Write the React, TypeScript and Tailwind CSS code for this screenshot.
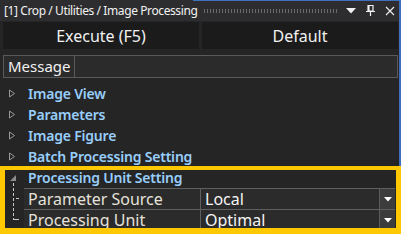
import React from "react";

const font = { fontFamily: '"Noto Sans", "Open Sans", sans-serif' };

function Collapsed() {
    return (
        <svg width="8" height="9" viewBox="0 0 8 9" className="shrink-0">
            <path d="M1.5 1 L6.5 4.5 L1.5 8 Z" fill="none" stroke="#9a9a9a" strokeWidth="1"/>
        </svg>
    );
}

function Expanded() {
    return (
        <svg width="8" height="8" viewBox="0 0 8 8" className="shrink-0">
            <path d="M7 1 L7 7 L1 7 Z" fill="#8c8c8c"/>
        </svg>
    );
}

function DropButton() {
    return (
        <div className="w-[16px] h-full bg-[#3c3c3c] border-l border-[#5c5c5c] flex items-center justify-center">
            <svg width="8" height="5" viewBox="0 0 8 5">
                <path d="M0 0 L8 0 L4 4.5 Z" fill="#ffffff"/>
            </svg>
        </div>
    );
}

export default function App() {
    const groups = ["Image View", "Parameters", "Image Figure", "Batch Processing Setting"];
    const props = [
        ["Parameter Source", "Local"],
        ["Processing Unit", "Optimal"],
    ];

    return (
        <div className="w-[401px] h-[234px] bg-[#252526] relative overflow-hidden" style={font}>

            {/* Title bar */}
            <div className="h-[21px] flex items-center bg-[#2d2d30] pl-[4px] pr-[6px] text-[12px] text-[#f1f1f1]">
                <span className="whitespace-nowrap leading-none tracking-[-0.4px]">[1] Crop / Utilities / Image Processing</span>
                <div className="flex-1 ml-[6px] mr-[9px] h-[4px] bg-[radial-gradient(circle,#6a6a6e_0.7px,transparent_0.8px)] bg-[length:3px_2px]"/>
                <div className="flex items-center gap-[10px]">
                    <svg width="10" height="6" viewBox="0 0 10 6">
                        <path d="M0 0 L10 0 L5 5.5 Z" fill="#f1f1f1"/>
                    </svg>
                    <svg width="9" height="11" viewBox="0 0 9 11">
                        <path d="M2 0.5 H7 V6 H2 Z M3 0.5 V6 M0 6.5 H9 M4.5 6.5 V11" fill="none" stroke="#f1f1f1" strokeWidth="1.2"/>
                    </svg>
                    <svg width="10" height="10" viewBox="0 0 10 10">
                        <path d="M1 1 L9 9 M9 1 L1 9" stroke="#f1f1f1" strokeWidth="1.1"/>
                    </svg>
                </div>
            </div>

            {/* Toolbar */}
            <div className="flex gap-[3px] px-[3px] pt-[1px] h-[29px]">
                <button className="flex-1 h-[27px] bg-[#1b1b1c] text-[16px] text-[#f1f1f1]">Execute (F5)</button>
                <button className="flex-1 h-[27px] bg-[#1b1b1c] text-[16px] text-[#f1f1f1]">Default</button>
            </div>

            {/* Message */}
            <div className="mx-[3px] mt-[5px] h-[23px] flex border border-[#5a5a5a] bg-[#2b2b2b]">
                <div className="w-[71px] border-r border-[#5a5a5a] pl-[4px] flex items-center text-[15px] text-[#f1f1f1]">
                    Message
                </div>
                <div className="flex-1"/>
            </div>

            {/* Tree */}
            <div className="mt-[5px]">
                {groups.map((g) => (
                    <div key={g} className="h-[21px] flex items-center pl-[8px] gap-[12px]">
                        <Collapsed/>
                        <span className="text-[14px] font-semibold text-[#98cefa] whitespace-nowrap tracking-[-0.2px]">{g}</span>
                    </div>
                ))}
                <div className="h-[21px] flex items-center pl-[9px] gap-[11px]">
                    <Expanded/>
                    <span className="text-[14px] font-semibold text-[#98cefa] whitespace-nowrap tracking-[-0.2px]">Processing Unit Setting</span>
                </div>
                <div className="flex pr-[6px]">
                    <div className="w-[24px] shrink-0">
                        <svg width="24" height="41" viewBox="0 0 24 41" className="overflow-visible">
                            <path d="M13.5 -5 V32" stroke="#c8c8c8" strokeDasharray="3 2"/>
                            <path d="M16 10.5 H19" stroke="#c8c8c8"/>
                            <path d="M14 31.5 H19" stroke="#c8c8c8"/>
                        </svg>
                    </div>
                    <div className="flex-1">
                        {props.map(([k, v]) => (
                            <div key={k} className="h-[21px] flex border-t border-[#5f5f5f] bg-[#2b2b2b]">
                                <div className="w-[177px] border-r border-[#5f5f5f] pl-[4px] flex items-center text-[16px] text-[#e6e2da] whitespace-nowrap">
                                    {k}
                                </div>
                                <div className="flex-1 pl-[4px] flex items-center text-[16px] text-[#f4f4f4]">{v}</div>
                                <DropButton/>
                            </div>
                        ))}
                    </div>
                </div>
            </div>

            {/* Window edge highlight */}
            <div className="absolute top-0 left-[193px] right-0 h-[1px] bg-[#3f6fbf]"/>
            <div className="absolute top-0 right-0 bottom-0 w-[2px] bg-[#3f6fbf]"/>

            {/* Highlight frame */}
            <div className="absolute left-0 top-[166px] w-[401px] h-[68px] border-x-[5px] border-t-[4px] border-b-[6px] border-[#ffc800]"/>
        </div>
    );
}
